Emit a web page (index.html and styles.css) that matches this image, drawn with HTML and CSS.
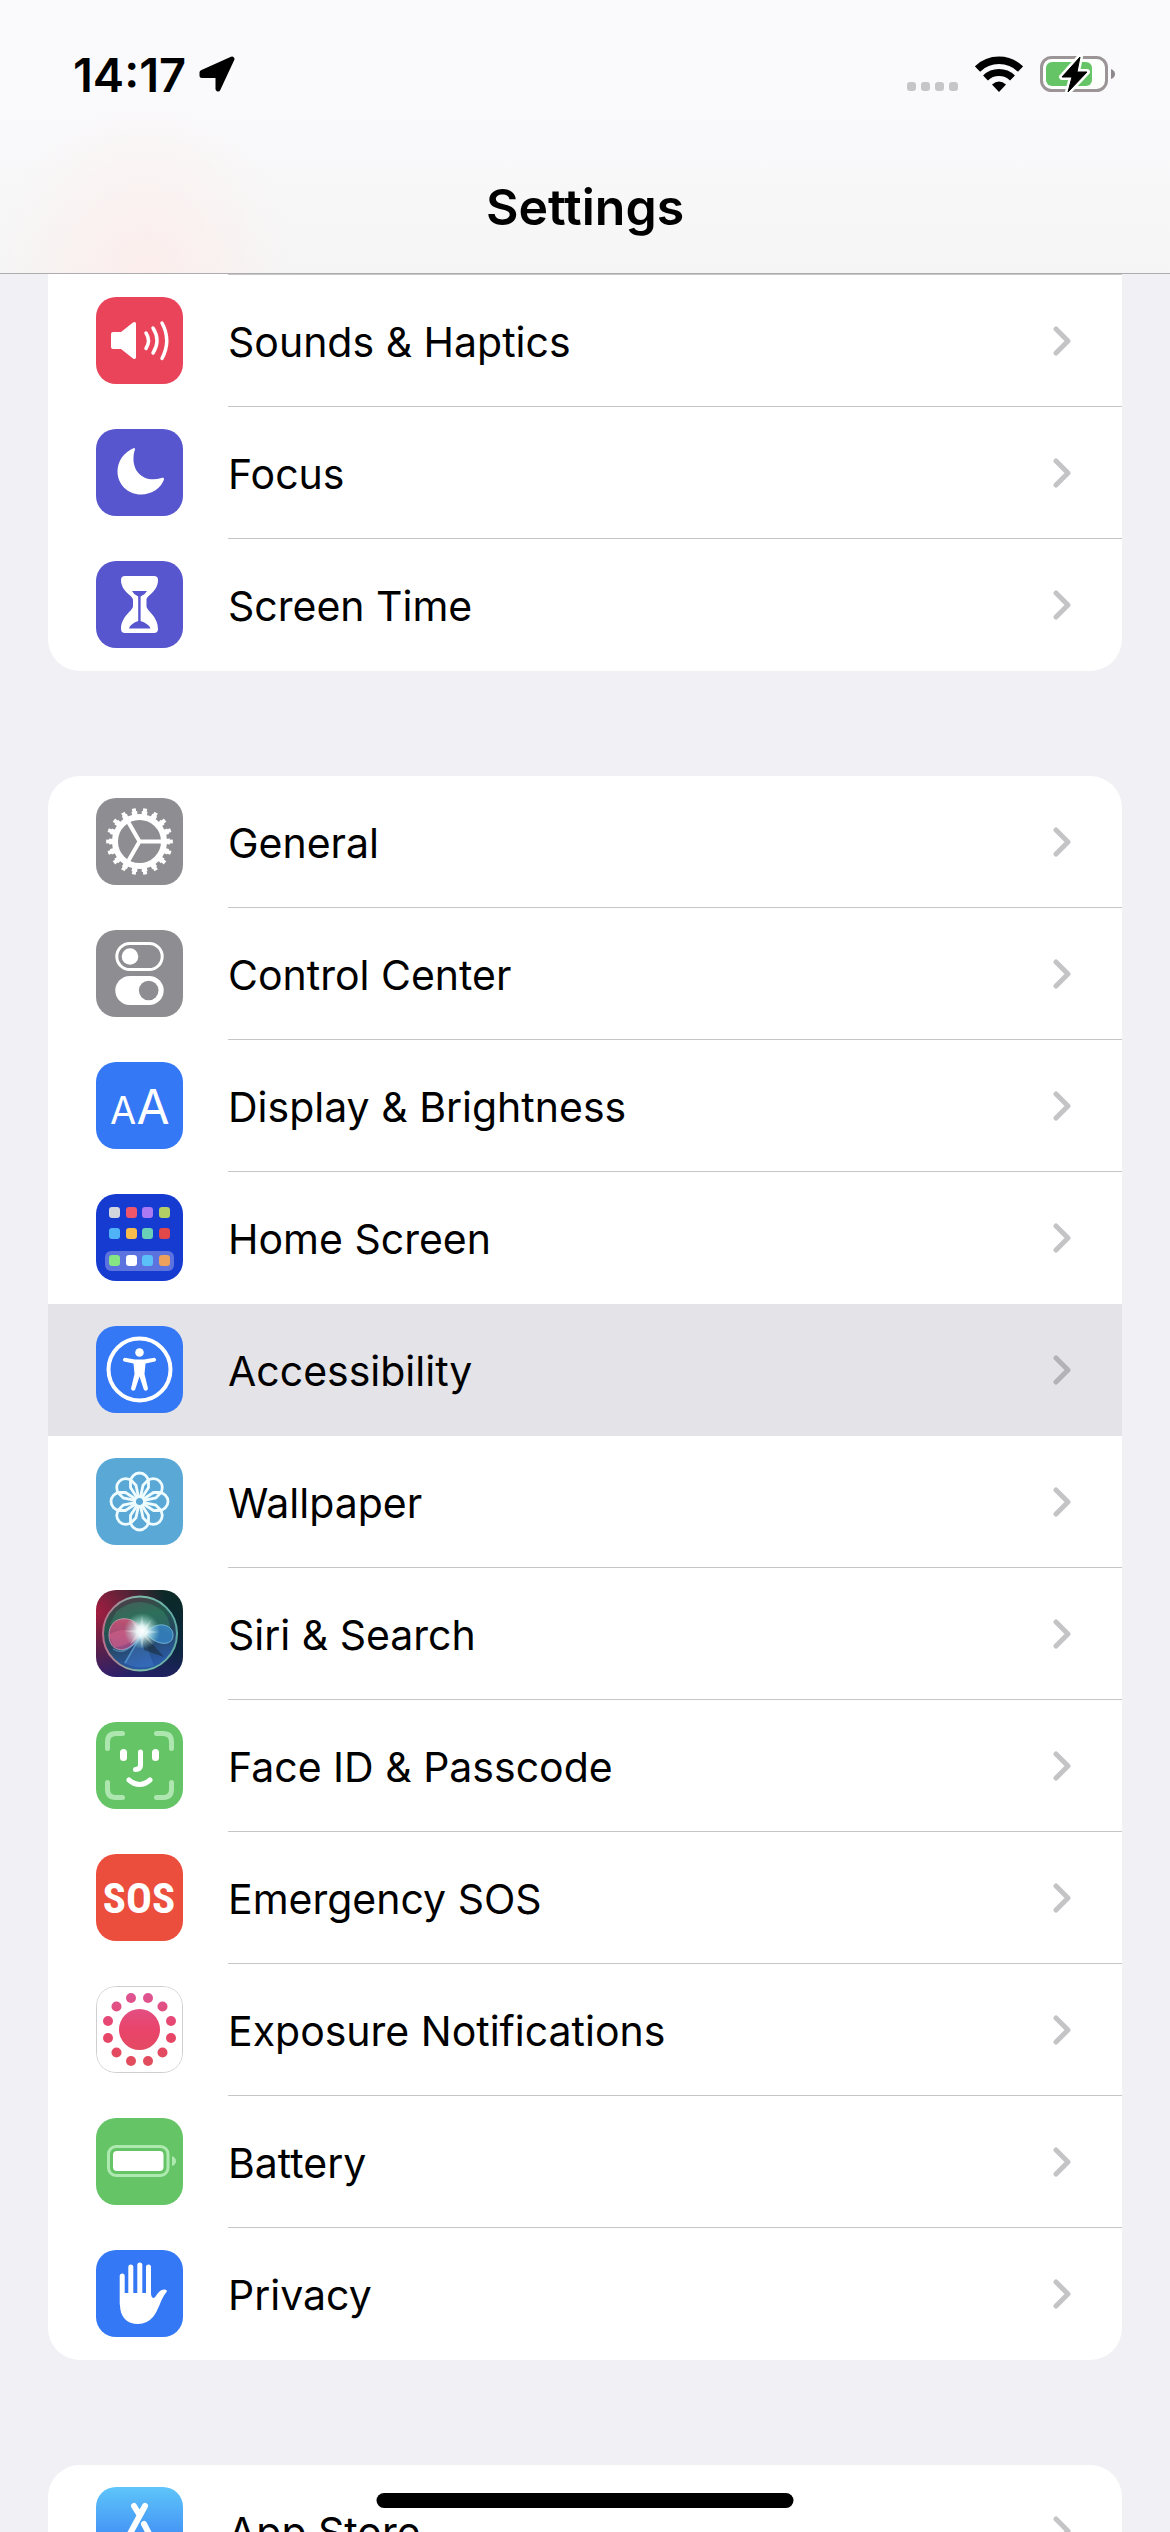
FILE: index.html
```html
<!DOCTYPE html>
<html lang="en">
<head>
  <meta charset="UTF-8">
  <meta name="viewport" content="width=device-width, initial-scale=1">
  <title>Settings</title>
  <link rel="stylesheet" href="styles.css">
</head>
<body>
  <!-- Shared arrow for every row -->
  <svg class="defs" aria-hidden="true">
    <symbol id="chevron" viewBox="0 0 18 30">
      <path d="M3 3l12 12L3 27" fill="none" stroke="currentColor" stroke-width="5" stroke-linecap="round" stroke-linejoin="round"/>
    </symbol>
  </svg>

  <header class="header">
    <div class="status-bar">
      <div class="status-left">
        <span class="time">14:17</span>
        <svg class="location" viewBox="0 0 36 36"><path d="M33 3L19 33V19.500H3V16.500Z" stroke="#000" stroke-width="5" stroke-linejoin="round"/></svg>
      </div>
      <div class="status-right">
        <div class="signal"><i></i><i></i><i></i><i></i></div>
        <svg class="wifi" viewBox="0 0 48 36">
          <path d="M2.500 13A31 31 0 0 1 45.500 13" fill="none" stroke="#000" stroke-width="7.500"/>
          <path d="M10.500 22A19.500 19.500 0 0 1 37.500 22" fill="none" stroke="#000" stroke-width="7"/>
          <path d="M24 36l-7-7.500q7-6 14 0z"/>
        </svg>
        <svg class="charge" viewBox="0 0 76 40">
          <rect x="1.500" y="3.500" width="65" height="33" rx="10" fill="#fcfffc" stroke="#9b9597" stroke-width="3"/>
          <rect x="6" y="8" width="46" height="24" rx="6" fill="#65c466"/>
          <path d="M71 15q4 1.500 4 5t-4 5z" fill="#8e898b"/>
          <path d="M40 3L22 23h10l-4 15L47 18H37z" fill="#000" stroke="#fcfffc" stroke-width="6" stroke-linejoin="round"/>
          <path d="M40 3L22 23h10l-4 15L47 18H37z" stroke="#000" stroke-linejoin="round"/>
        </svg>
      </div>
    </div>
    <h1 class="title">Settings</h1>
  </header>

  <main class="content">
    <nav class="group group-scrolled">
      <a class="row" href="#sounds">
        <svg class="icon red" viewBox="0 0 87 87">
          <path d="M17 35h8l12-9.500q3-1.500 3 1.500v33q0 3-3 1.500L25 52h-8q-2 0-2-2V37q0-2 2-2z" fill="#fff"/>
          <path d="M50 36q5 7.500 0 15.500M57 31q8 12.500 0 25M66 26q9.500 17.500 0 35.500" fill="none" stroke="#fff" stroke-width="3.500" stroke-linecap="round"/>
        </svg>
        <span class="label">Sounds &amp; Haptics</span>
        <svg class="chevron"><use href="#chevron"/></svg>
      </a>
      <a class="row" href="#focus">
        <svg class="icon indigo" viewBox="0 0 87 87">
          <path d="M38 19C28 23 21.500 32 21.500 42.500C21.500 55.500 32 65.500 45 65.500C56 65.500 65 59 68 50.500C68.300 49 67 48.300 65.500 49C49 54 37 44 37.500 29C37.500 26 38 23 39 20.500Q39 18.600 38 19Z" fill="#fff"/>
        </svg>
        <span class="label">Focus</span>
        <svg class="chevron"><use href="#chevron"/></svg>
      </a>
      <a class="row" href="#screen-time">
        <svg class="icon indigo" viewBox="0 0 87 87">
          <path d="M29 15H58Q62 15 62 19C62 31 50.500 34 50.500 39V45C50.500 50 62 55 62 68Q62 72 58 72H29Q25 72 25 68C25 55 37 50 37 45V39C37 34 25 31 25 19Q25 15 29 15Z" fill="#fff"/>
          <path d="M36 30H51Q49 34 44.600 35.500V60Q53 63 54.500 67.500H33Q34 63 42.200 60V35.500Q38 34 36 30Z" fill="#5756ce"/>
        </svg>
        <span class="label">Screen Time</span>
        <svg class="chevron"><use href="#chevron"/></svg>
      </a>
    </nav>

    <nav class="group">
      <a class="row" href="#general">
        <svg class="icon gray" viewBox="0 0 87 87">
          <g fill="none" stroke="#fff">
            <circle cx="43.500" cy="43.500" r="24.500" stroke-width="6"/>
            <circle cx="43.500" cy="43.500" r="28.500" stroke-width="4" pathLength="36" stroke-dasharray="1.100 .9" stroke-dashoffset=".55"/>
            <circle cx="43.500" cy="43.500" r="31.600" stroke-width="3.500" pathLength="36" stroke-dasharray=".7 1.300" stroke-dashoffset=".35"/>
            <path d="M67 43.500H43.500L31.700 23M43.500 43.500L31.700 64" stroke-width="4"/>
          </g>
        </svg>
        <span class="label">General</span>
        <svg class="chevron"><use href="#chevron"/></svg>
      </a>
      <a class="row" href="#control-center">
        <svg class="icon gray" viewBox="0 0 87 87">
          <rect x="20.800" y="13.500" width="45.400" height="26" rx="13" fill="none" stroke="#fff" stroke-width="3"/>
          <circle cx="34" cy="26.500" r="8.300" fill="#fff"/>
          <rect x="19.300" y="46" width="48.400" height="29" rx="14.500" fill="#fff"/>
          <circle cx="52.700" cy="60.500" r="9.800" fill="#8e8e92"/>
        </svg>
        <span class="label">Control Center</span>
        <svg class="chevron"><use href="#chevron"/></svg>
      </a>
      <a class="row" href="#display">
        <svg class="icon blue" viewBox="0 0 87 87">
          <text x="27" y="62" class="glyph glyph-small">A</text>
          <text x="57" y="62" class="glyph glyph-large">A</text>
        </svg>
        <span class="label">Display &amp; Brightness</span>
        <svg class="chevron"><use href="#chevron"/></svg>
      </a>
      <a class="row row-last" href="#home-screen">
        <svg class="icon navy" viewBox="0 0 87 87">
          <rect x="9" y="57" width="69" height="20" rx="6" fill="#5b72df"/>
          <rect x="13" y="13" width="11" height="11" rx="3" fill="#d3d6dc"/>
          <rect x="30" y="13" width="11" height="11" rx="3" fill="#ef566c"/>
          <rect x="46" y="13" width="11" height="11" rx="3" fill="#ab79f4"/>
          <rect x="63" y="13" width="11" height="11" rx="3" fill="#b3ce64"/>
          <rect x="13" y="34" width="11" height="11" rx="3" fill="#51b3f7"/>
          <rect x="30" y="34" width="11" height="11" rx="3" fill="#f8bc4c"/>
          <rect x="46" y="34" width="11" height="11" rx="3" fill="#6ad1b9"/>
          <rect x="63" y="34" width="11" height="11" rx="3" fill="#e24749"/>
          <rect x="13" y="61" width="11" height="11" rx="3" fill="#86e684"/>
          <rect x="30" y="61" width="11" height="11" rx="3" fill="#fff"/>
          <rect x="46" y="61" width="11" height="11" rx="3" fill="#5cc0f8"/>
          <rect x="63" y="61" width="11" height="11" rx="3" fill="#eca25c"/>
        </svg>
        <span class="label">Home Screen</span>
        <svg class="chevron"><use href="#chevron"/></svg>
      </a>
      <a class="row row-last active" href="#accessibility">
        <svg class="icon blue" viewBox="0 0 87 87">
          <circle cx="43.500" cy="43.500" r="31" fill="none" stroke="#fff" stroke-width="4"/>
          <circle cx="43.500" cy="26.500" r="4.300" fill="#fff"/>
          <path d="M28.500 31.700L39 33.500H48L58.500 31.700Q61.500 33.500 59 35.500L49.500 37.500L48.500 48L52 62.500Q51 66 48 64L43.500 50.500L39 64Q36 66 35 62.500L38.500 48L37.500 37.500L28 35.500Q25.500 33.500 28.500 31.700Z" fill="#fff"/>
        </svg>
        <span class="label">Accessibility</span>
        <svg class="chevron"><use href="#chevron"/></svg>
      </a>
      <a class="row" href="#wallpaper">
        <svg class="icon sky" viewBox="0 0 87 87">
          <defs>
            <path id="petal" d="M-2.500 -4L-9 -14V-19.500A9 9 0 0 1 9 -19.500V-14L2.500 -4"/>
          </defs>
          <g transform="translate(43.500 43.500)" fill="none" stroke="#effcff" stroke-width="2.800">
            <use href="#petal"/>
            <use href="#petal" transform="rotate(45)"/>
            <use href="#petal" transform="rotate(90)"/>
            <use href="#petal" transform="rotate(135)"/>
            <use href="#petal" transform="rotate(180)"/>
            <use href="#petal" transform="rotate(225)"/>
            <use href="#petal" transform="rotate(270)"/>
            <use href="#petal" transform="rotate(315)"/>
            <circle r="5"/>
          </g>
        </svg>
        <span class="label">Wallpaper</span>
        <svg class="chevron"><use href="#chevron"/></svg>
      </a>
      <a class="row" href="#siri">
        <svg class="icon siri" viewBox="0 0 87 87">
          <defs>
            <radialGradient id="glow">
              <stop offset="0" stop-color="#fff"/>
              <stop offset=".3" stop-color="#eaffff" stop-opacity=".9"/>
              <stop offset="1" stop-color="#9fe8dc" stop-opacity="0"/>
            </radialGradient>
            <linearGradient id="orb" x1="0" y1="0" x2=".3" y2="1">
              <stop offset="0" stop-color="#5a3348"/>
              <stop offset=".4" stop-color="#23594c"/>
              <stop offset=".65" stop-color="#26465e"/>
              <stop offset="1" stop-color="#2a5aa6"/>
            </linearGradient>
            <linearGradient id="pink" x1="0" y1="0" x2="0" y2="1">
              <stop offset="0" stop-color="#d94f76"/>
              <stop offset="1" stop-color="#a34c88"/>
            </linearGradient>
            <linearGradient id="rim" x1="0" y1="0" x2="1" y2="0">
              <stop offset="0" stop-color="#b9708a"/>
              <stop offset=".5" stop-color="#79bda8"/>
              <stop offset="1" stop-color="#5fa9a5"/>
            </linearGradient>
          </defs>
          <circle cx="44" cy="43.500" r="37" fill="url(#orb)" stroke="url(#rim)" stroke-width="2"/>
          <path d="M20 22Q43 2 68 22Q76 33 74 44Q60 32 46 42Q34 27 14 34Z" fill="#3e9b76" opacity=".35"/>
          <path d="M46 42L28 73Q42 80 58 76Z" fill="#447fd0" opacity=".4"/>
          <path d="M46 42L68 67L48 60Z" fill="#17252e" opacity=".5"/>
          <path d="M47 41C39 24 13 24 13 45C13 66 38 64 47 41Z" fill="url(#pink)" stroke="#da9bb7" stroke-width="1" opacity=".85"/>
          <path d="M13 45Q23 37 47 41Q33 57 18 57Z" fill="#f26f91" opacity=".35"/>
          <path d="M50 43C60 30 77 34 77 45C77 57 60 56 50 43Z" fill="#3583c2" stroke="#7bc4e2" stroke-width="1" opacity=".85"/>
          <path d="M17 59Q30 68 47 42L29 73" fill="none" stroke="#65aee2" stroke-width="1.500" opacity=".6"/>
          <circle cx="46" cy="41" r="18" fill="url(#glow)"/>
          <path d="M46 25l2 13 8-9-6 11 13 2-13 2 7 11-9-8-2 12-2-12-10 7 7-11-13-2 13-1-6-10 9 7z" fill="#fff" opacity=".3"/>
        </svg>
        <span class="label">Siri &amp; Search</span>
        <svg class="chevron"><use href="#chevron"/></svg>
      </a>
      <a class="row" href="#face-id">
        <svg class="icon green" viewBox="0 0 87 87">
          <path d="M26.500 11.500H20Q11.500 11.500 11.500 20V26.500M60.500 11.500H67Q75.500 11.500 75.500 20V26.500M11.500 60.500V67Q11.500 75.500 20 75.500H26.500M75.500 60.500V67Q75.500 75.500 67 75.500H60.500" fill="none" stroke="#aee6af" stroke-width="5" stroke-linecap="round"/>
          <rect x="24" y="27" width="7" height="12" rx="3.500" fill="#fff"/>
          <rect x="56" y="27" width="7" height="12" rx="3.500" fill="#fff"/>
          <path d="M44.500 30V43Q44.500 47.500 39.500 47.500M33 58Q43.500 67 54 58" fill="none" stroke="#fff" stroke-width="5" stroke-linecap="round"/>
        </svg>
        <span class="label">Face ID &amp; Passcode</span>
        <svg class="chevron"><use href="#chevron"/></svg>
      </a>
      <a class="row" href="#sos">
        <svg class="icon orange" viewBox="0 0 87 87">
          <text x="43" y="59" class="glyph glyph-sos">SOS</text>
        </svg>
        <span class="label">Emergency SOS</span>
        <svg class="chevron"><use href="#chevron"/></svg>
      </a>
      <a class="row" href="#exposure">
        <svg class="icon white" viewBox="0 0 87 87">
          <defs>
            <linearGradient id="exposure-fill" gradientUnits="userSpaceOnUse" x1="0" y1="8" x2="0" y2="80">
              <stop offset="0" stop-color="#dd5592"/>
              <stop offset=".5" stop-color="#e9446a"/>
              <stop offset="1" stop-color="#e04e5c"/>
            </linearGradient>
          </defs>
          <rect x=".5" y=".5" width="86" height="86" rx="19" fill="#fff" stroke="#cfcfd1"/>
          <g fill="url(#exposure-fill)">
            <circle cx="43.500" cy="43.500" r="20.500"/>
            <circle cx="35" cy="12" r="5"/>
            <circle cx="52" cy="12" r="5"/>
            <circle cx="66.500" cy="20.500" r="5"/>
            <circle cx="75" cy="35" r="5"/>
            <circle cx="75" cy="52" r="5"/>
            <circle cx="66.500" cy="66.500" r="5"/>
            <circle cx="52" cy="75" r="5"/>
            <circle cx="35" cy="75" r="5"/>
            <circle cx="20.500" cy="66.500" r="5"/>
            <circle cx="12" cy="52" r="5"/>
            <circle cx="12" cy="35" r="5"/>
            <circle cx="20.500" cy="20.500" r="5"/>
          </g>
        </svg>
        <span class="label">Exposure Notifications</span>
        <svg class="chevron"><use href="#chevron"/></svg>
      </a>
      <a class="row" href="#battery">
        <svg class="icon green" viewBox="0 0 87 87">
          <rect x="12.500" y="28.500" width="59.500" height="29" rx="7.500" fill="none" stroke="#aeeaaf" stroke-width="3"/>
          <rect x="17" y="33" width="50.500" height="20" rx="4" fill="#fff"/>
          <path d="M76 38q4 1.500 4 5t-4 5z" fill="#aeeaaf"/>
        </svg>
        <span class="label">Battery</span>
        <svg class="chevron"><use href="#chevron"/></svg>
      </a>
      <a class="row" href="#privacy">
        <svg class="icon blue" viewBox="0 0 87 87">
          <path d="M26.200 26V54M34.800 17V50M43.800 15V50M52.500 17V50" fill="none" stroke="#fff" stroke-width="5" stroke-linecap="round"/>
          <path d="M24 43H55Q55 48 58 48C61 46 62 40 68 39.500Q72 39.500 70.500 42C64 50 63 60 57 67Q51 74 42 74C31 74 24 67 24 55Z" fill="#fff"/>
        </svg>
        <span class="label">Privacy</span>
        <svg class="chevron"><use href="#chevron"/></svg>
      </a>
    </nav>

    <nav class="group">
      <a class="row" href="#app-store">
        <svg class="icon store" viewBox="0 0 87 87">
          <path d="M49 19L30 54M38 19L43 27M48 37L60 60M20 55H67" fill="none" stroke="#fff" stroke-width="6" stroke-linecap="round"/>
        </svg>
        <span class="label">App Store</span>
        <svg class="chevron"><use href="#chevron"/></svg>
      </a>
    </nav>
  </main>

  <div class="home-indicator"></div>
</body>
</html>
```
FILE: styles.css
```css
* {
  box-sizing: border-box;
}

body {
  margin: 0;
  height: 100vh;
  overflow: hidden;
  background-color: #f1f0f5;
  color: #000;
  font-family: Inter, "Liberation Sans", sans-serif;
}

.defs {
  display: none;
}

/* Header */
.header {
  height: 274px;
  border-bottom: 1px solid #adadaf;
  background-color: #f8f8fa;
  background-image:
    radial-gradient(ellipse 150px 180px at 145px 273px, #fceeec, rgba(252, 238, 236, 0)),
    linear-gradient(#fafafc 40%, #f5f5f5);
}

.status-bar {
  display: flex;
  justify-content: space-between;
  align-items: center;
  height: 148px;
  padding: 0 54px 0 73px;
}

.status-left,
.status-right {
  display: flex;
  align-items: center;
}

.status-left {
  gap: 13px;
}

.time {
  font-size: 47px;
  font-weight: 600;
}

.location {
  width: 36px;
  height: 36px;
}

.signal {
  display: flex;
  align-self: flex-end;
  gap: 5px;
  margin: 0 17px 3px 0;
}

.signal i {
  width: 9px;
  height: 9px;
  border-radius: 3px;
  background-color: #c6c6c8;
}

.wifi {
  width: 48px;
  height: 36px;
  margin-right: 17px;
}

.charge {
  width: 76px;
  height: 40px;
}

.title {
  margin: 29px 0 0;
  font-size: 50px;
  font-weight: 600;
  line-height: 60px;
  text-align: center;
}

/* Setting groups */
.content {
  display: flex;
  flex-direction: column;
  gap: 105px;
  padding: 0 48px;
}

.group {
  border-radius: 32px;
  background-color: #fff;
  overflow: hidden;
  flex-shrink: 0;
}

/* first group sits partly under the header */
.group-scrolled {
  border-radius: 0 0 32px 32px;
}

.group-scrolled::before {
  content: "";
  display: block;
  height: 1px;
  margin-left: 180px;
  background-color: #c6c6c8;
}

.row {
  display: flex;
  align-items: center;
  height: 132px;
  padding: 0 51px 1px 48px;
  color: inherit;
  text-decoration: none;
  background: linear-gradient(#c6c6c8, #c6c6c8) 180px 100% / 100% 1px no-repeat;
}

.row:last-child,
.row-last {
  background: none;
}

.row.active {
  background-color: #e4e3e8;
}

.label {
  flex: 1;
  margin-left: 45px;
  padding-top: 2px;
  font-size: 41px;
  line-height: 52px;
}

.chevron {
  width: 18px;
  height: 30px;
  color: #c4c4c6;
}

.active .chevron {
  color: #b3b3b7;
}

/* Icon tiles */
.icon {
  width: 87px;
  height: 87px;
  border-radius: 20px;
}

.red { background-color: #ea445a; }
.indigo { background-color: #5756ce; }
.gray { background-color: #8e8e92; }
.blue { background-color: #3478f6; }
.navy { background-color: #163bd0; }
.sky { background-color: #5aa8d6; }
.green { background-color: #65c466; }
.orange { background-color: #eb4e3d; }
.white { background-color: #fff; }
.store { background-image: linear-gradient(#5ec5fa, #2f6cf0); }

.siri {
  background-image:
    radial-gradient(circle at 0 25%, #a51d40, rgba(120, 20, 60, 0) 65%),
    linear-gradient(15deg, #2c1f74, #0d2640 45%, #0b2a24);
}

.glyph {
  fill: #fff;
  text-anchor: middle;
}

.glyph-small {
  font-size: 38px;
}

.glyph-large {
  font-size: 48px;
}

.glyph-sos {
  font-family: "Roboto Condensed", Roboto, sans-serif;
  font-size: 43px;
  font-weight: 700;
}

.home-indicator {
  position: fixed;
  bottom: 24px;
  left: 50%;
  width: 417px;
  height: 15px;
  border-radius: 8px;
  background-color: #000;
  transform: translateX(-50%);
}
```
